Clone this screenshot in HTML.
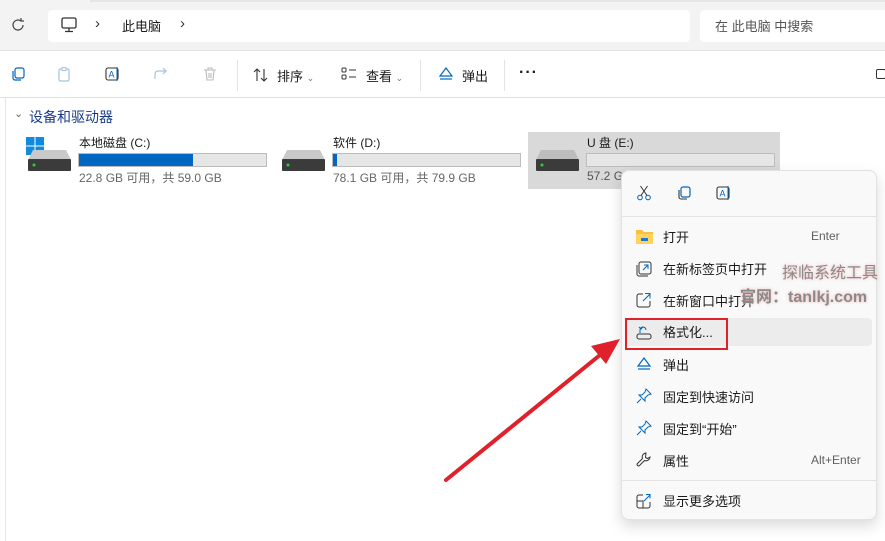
<!DOCTYPE html>
<html><head><meta charset="utf-8"><style>
*{margin:0;padding:0;box-sizing:border-box}
body{width:885px;height:541px;overflow:hidden;background:#fff;font-family:"Liberation Sans","Noto Sans CJK SC",sans-serif;font-size:13px;color:#1a1a1a;position:relative}
.a{position:absolute}
.bar{height:11px;background:#e6e6e6;border:1px solid #bcbcbc}
.mi{position:absolute;left:663px;font-size:13px}
.ic{position:absolute;left:636px}
.k{position:absolute;font-size:12px;color:#5f5f5f}
</style></head><body>
<div class="a" style="left:0;top:0;width:885px;height:51px;background:#f3f3f3;border-bottom:1px solid #e0e0e0"></div>
<div class="a" style="left:90px;top:0;width:795px;height:2px;background:#e5e5e5"></div>
<svg class="a" style="left:10px;top:17px" width="16" height="16" viewBox="0 0 16 16"><path d="M13 8a5 5 0 1 1-2-4M11 1v3h3" fill="none" stroke="#444" stroke-width="1.2"/></svg>
<div class="a" style="left:48px;top:10px;width:642px;height:32px;background:#fff;border-radius:4px"></div>
<svg class="a" style="left:60px;top:16px" width="18" height="18" viewBox="0 0 18 18"><rect x="2" y="2" width="14" height="10" rx="1.5" fill="none" stroke="#333" stroke-width="1.3"/><path d="M9 12v3M5 15.5h8" stroke="#333" stroke-width="1.3"/></svg>
<div class="a" style="left:95px;top:15px;color:#333;font-size:15px">›</div>
<div class="a" style="left:122px;top:16px">此电脑</div>
<div class="a" style="left:180px;top:15px;color:#333;font-size:15px">›</div>
<div class="a" style="left:700px;top:10px;width:185px;height:32px;background:#fff;border-radius:4px 0 0 4px"></div>
<div class="a" style="left:715px;top:16px;color:#555">在 此电脑 中搜索</div>
<div class="a" style="left:0;top:97px;width:885px;height:1px;background:#e0e0e0"></div>
<svg class="a" style="left:10px;top:66px" width="16" height="16" viewBox="0 0 16 16"><rect x="5" y="2" width="9" height="10" rx="2" fill="none" stroke="#0067c0" stroke-width="1.2"/><path d="M3 5v7a2 2 0 0 0 2 2h6" fill="none" stroke="#0067c0" stroke-width="1.2"/></svg>
<svg class="a" style="left:56px;top:66px" width="16" height="16" viewBox="0 0 16 16"><rect x="3" y="3" width="10" height="12" rx="1.5" fill="none" stroke="#9fc3e6" stroke-width="1.2"/><rect x="6" y="1.5" width="4" height="3" fill="#fff" stroke="#9fc3e6"/></svg>
<svg class="a" style="left:104px;top:66px" width="18" height="16" viewBox="0 0 18 16"><rect x="2" y="2" width="12" height="12" rx="2" fill="none" stroke="#333" stroke-width="1.1"/><text x="4.5" y="11.5" font-size="9" fill="#0067c0" font-family="Liberation Sans">A</text><path d="M13 1v14" stroke="#0067c0"/></svg>
<svg class="a" style="left:153px;top:66px" width="16" height="16" viewBox="0 0 16 16"><path d="M2 13V8a3 3 0 0 1 3-3h8M10 2l3 3-3 3" fill="none" stroke="#9fc3e6" stroke-width="1.2"/></svg>
<svg class="a" style="left:202px;top:66px" width="16" height="16" viewBox="0 0 16 16"><path d="M2 4h12M6 4V2h4v2M4 4l1 10h6l1-10M7 7v5M9 7v5" fill="none" stroke="#bbb" stroke-width="1.1"/></svg>
<div class="a" style="left:237px;top:60px;width:1px;height:31px;background:#e3e3e3"></div>
<svg class="a" style="left:252px;top:67px" width="18" height="16" viewBox="0 0 18 16"><path d="M5 14V2M2 5l3-3 3 3M12 2v12M9 11l3 3 3-3" fill="none" stroke="#333" stroke-width="1.1"/></svg>
<div class="a" style="left:277px;top:66px">排序 <span style="font-size:9px;color:#777">⌄</span></div>
<svg class="a" style="left:341px;top:67px" width="16" height="14" viewBox="0 0 16 14"><rect x="1" y="1" width="4" height="4" rx="1" fill="none" stroke="#333"/><rect x="1" y="8" width="4" height="4" rx="1" fill="none" stroke="#333"/><path d="M8 3h7M8 10h7" stroke="#333"/></svg>
<div class="a" style="left:366px;top:66px">查看 <span style="font-size:9px;color:#777">⌄</span></div>
<div class="a" style="left:420px;top:60px;width:1px;height:31px;background:#e3e3e3"></div>
<svg class="a" style="left:438px;top:66px" width="16" height="16" viewBox="0 0 16 16"><path d="M8 2L2 10h12z" fill="none" stroke="#0067c0" stroke-width="1.2"/><path d="M2 13h12" stroke="#0067c0" stroke-width="1.2"/></svg>
<div class="a" style="left:462px;top:66px">弹出</div>
<div class="a" style="left:504px;top:60px;width:1px;height:31px;background:#e3e3e3"></div>
<div class="a" style="left:519px;top:64px;font-size:16px;font-weight:bold;letter-spacing:1px">···</div>
<div class="a" style="left:876px;top:69px;width:10px;height:10px;border:1px solid #333;border-radius:2px"></div>
<div class="a" style="left:5px;top:98px;width:1px;height:443px;background:#e5e5e5"></div>
<div class="a" style="left:14px;top:107px;font-size:11px;color:#666">⌄</div>
<div class="a" style="left:29px;top:107px;color:#1a3a8a;font-size:14px">设备和驱动器</div>
<div class="a" style="left:528px;top:132px;width:252px;height:57px;background:#d9d9d9"></div>
<svg class="a" style="left:26px;top:137px" width="20" height="20" viewBox="0 0 20 20"><rect x="0" y="0" width="8.5" height="8.5" fill="#0f8be0"/><rect x="9.5" y="0" width="8.5" height="8.5" fill="#0f8be0"/><rect x="0" y="9.5" width="8.5" height="8.5" fill="#0f8be0"/><rect x="9.5" y="9.5" width="8.5" height="8.5" fill="#0f8be0"/></svg>
<svg class="a" style="left:27px;top:148px" width="45" height="24" viewBox="0 0 45 24"><path d="M6 2h33l5 10H1z" fill="#c9c9c9"/><rect x="1" y="11" width="43" height="12" rx="1" fill="#3b3b3b"/><circle cx="7" cy="17" r="1.5" fill="#2ecc40"/></svg>
<svg class="a" style="left:281px;top:148px" width="45" height="24" viewBox="0 0 45 24"><path d="M6 2h33l5 10H1z" fill="#c9c9c9"/><rect x="1" y="11" width="43" height="12" rx="1" fill="#3b3b3b"/><circle cx="7" cy="17" r="1.5" fill="#2ecc40"/></svg>
<svg class="a" style="left:535px;top:148px" width="45" height="24" viewBox="0 0 45 24"><path d="M6 2h33l5 10H1z" fill="#bdbdbd"/><rect x="1" y="11" width="43" height="12" rx="1" fill="#3b3b3b"/><circle cx="7" cy="17" r="1.5" fill="#2ecc40"/></svg>
<div class="a" style="left:79px;top:134px;font-size:12px">本地磁盘 (C:)</div>
<div class="a bar" style="left:78px;top:153px;width:189px;height:14px"><div style="width:114px;height:12px;background:#0067c0"></div></div>
<div class="a" style="left:79px;top:169px;font-size:12px;color:#666">22.8 GB 可用，共 59.0 GB</div>
<div class="a" style="left:333px;top:134px;font-size:12px">软件 (D:)</div>
<div class="a bar" style="left:332px;top:153px;width:189px;height:14px"><div style="width:4px;height:12px;background:#0067c0"></div></div>
<div class="a" style="left:333px;top:169px;font-size:12px;color:#666">78.1 GB 可用，共 79.9 GB</div>
<div class="a" style="left:587px;top:134px;font-size:12px">U 盘 (E:)</div>
<div class="a bar" style="left:586px;top:153px;width:189px;height:14px"></div>
<div class="a" style="left:587px;top:169px;font-size:12px;color:#555">57.2 GB</div>
<div class="a" style="left:621px;top:170px;width:256px;height:350px;background:#f9f9f9;border:1px solid #e2e2e2;border-radius:8px;box-shadow:0 6px 14px rgba(0,0,0,.15)"></div>
<svg class="a" style="left:636px;top:185px" width="16" height="16" viewBox="0 0 16 16"><circle cx="4" cy="12.5" r="2.3" fill="none" stroke="#0067c0"/><circle cx="12" cy="12.5" r="2.3" fill="none" stroke="#0067c0"/><path d="M5 10.5L11.5 1M11 10.5L4.5 1" stroke="#333"/></svg>
<svg class="a" style="left:676px;top:185px" width="16" height="16" viewBox="0 0 16 16"><rect x="5" y="2" width="9" height="10" rx="2" fill="none" stroke="#0067c0" stroke-width="1.2"/><path d="M3 5v7a2 2 0 0 0 2 2h6" fill="none" stroke="#333" stroke-width="1.1"/></svg>
<svg class="a" style="left:715px;top:185px" width="18" height="16" viewBox="0 0 18 16"><rect x="2" y="2" width="12" height="12" rx="2" fill="none" stroke="#333" stroke-width="1.1"/><text x="4.5" y="11.5" font-size="9" fill="#0067c0" font-family="Liberation Sans">A</text><path d="M13 1v14" stroke="#0067c0"/></svg>
<div class="a" style="left:622px;top:216px;width:254px;height:1px;background:#e3e3e3"></div>
<div class="a" style="left:626px;top:318px;width:246px;height:28px;background:#ececec;border-radius:4px"></div>
<svg class="ic" style="top:229px" width="17" height="15" viewBox="0 0 17 15"><path d="M0 1h6l2 2h9v12H0z" fill="#f7c142"/><rect x="0" y="5" width="17" height="10" fill="#ffd35c"/><rect x="5" y="9" width="7" height="3" fill="#1b7ad6"/></svg>
<div class="mi" style="top:227px">打开</div><div class="k" style="left:811px;top:229px">Enter</div>
<svg class="ic" style="top:261px" width="16" height="16" viewBox="0 0 16 16"><rect x="3" y="1" width="12" height="12" rx="2" fill="none" stroke="#333"/><path d="M1 4v9a2 2 0 0 0 2 2h9" fill="none" stroke="#333"/><path d="M7 9l5-5M8 4h4v4" fill="none" stroke="#0067c0"/></svg>
<div class="mi" style="top:259px">在新标签页中打开</div>
<svg class="ic" style="top:292px" width="16" height="16" viewBox="0 0 16 16"><path d="M7 2H3a2 2 0 0 0-2 2v9a2 2 0 0 0 2 2h9a2 2 0 0 0 2-2V9" fill="none" stroke="#333"/><path d="M7 9l7-7M9 1.5h5v5" fill="none" stroke="#0067c0"/></svg>
<div class="mi" style="top:291px">在新窗口中打开</div>
<svg class="ic" style="top:324px" width="16" height="16" viewBox="0 0 16 16"><rect x="1" y="10" width="14" height="5" rx="2" fill="none" stroke="#333"/><path d="M4 9V6a3 3 0 0 1 6 0M3 3l2 2 2-2" fill="none" stroke="#0067c0"/></svg>
<div class="mi" style="top:322px">格式化...</div>
<div class="a" style="left:625px;top:318px;width:103px;height:32px;border:2px solid #e0202a"></div>
<svg class="ic" style="top:356px" width="16" height="16" viewBox="0 0 16 16"><path d="M8 2L2 10h12z" fill="none" stroke="#0067c0" stroke-width="1.2"/><path d="M2 13h12" stroke="#0067c0" stroke-width="1.2"/></svg>
<div class="mi" style="top:355px">弹出</div>
<svg class="ic" style="top:388px" width="16" height="16" viewBox="0 0 16 16"><path d="M10 1l5 5-3 1-3 3 0 3-6-6 3 0 3-3zM5 11l-4 4" fill="none" stroke="#0067c0"/></svg>
<div class="mi" style="top:387px">固定到快速访问</div>
<svg class="ic" style="top:420px" width="16" height="16" viewBox="0 0 16 16"><path d="M10 1l5 5-3 1-3 3 0 3-6-6 3 0 3-3zM5 11l-4 4" fill="none" stroke="#0067c0"/></svg>
<div class="mi" style="top:419px">固定到“开始”</div>
<svg class="ic" style="top:452px" width="16" height="16" viewBox="0 0 16 16"><path d="M10 1a4 4 0 0 0-3.5 5.5L1.5 11.5a1.4 1.4 0 0 0 2 2l5-5A4 4 0 0 0 14 5l-2.5 1.5-2-1L10 1z" fill="none" stroke="#333"/></svg>
<div class="mi" style="top:451px">属性</div><div class="k" style="left:811px;top:453px">Alt+Enter</div>
<div class="a" style="left:622px;top:480px;width:254px;height:1px;background:#e3e3e3"></div>
<svg class="ic" style="top:493px" width="16" height="16" viewBox="0 0 16 16"><path d="M7 2H3a2 2 0 0 0-2 2v9a2 2 0 0 0 2 2h9a2 2 0 0 0 2-2V9M1 8h6v7" fill="none" stroke="#333"/><path d="M8 8l6-6M10 1.5h4v4" fill="none" stroke="#0067c0"/></svg>
<div class="mi" style="top:491px">显示更多选项</div>
<div class="a" style="left:782px;top:259px;font-size:16px;color:#8a8a8a;text-shadow:0 0 3px #f4b0b0">探临系统工具</div>
<div class="a" style="left:740px;top:283px;font-size:16px;color:#8a8a8a;font-weight:bold;text-shadow:0 0 3px #f4b0b0">官网：tanlkj.com</div>
<svg class="a" style="left:0;top:0" width="885" height="541"><line x1="446" y1="480" x2="600" y2="355" stroke="#e0202a" stroke-width="4" stroke-linecap="round"/><path d="M620 339L591 346 606 364z" fill="#e0202a"/></svg>
</body></html>
